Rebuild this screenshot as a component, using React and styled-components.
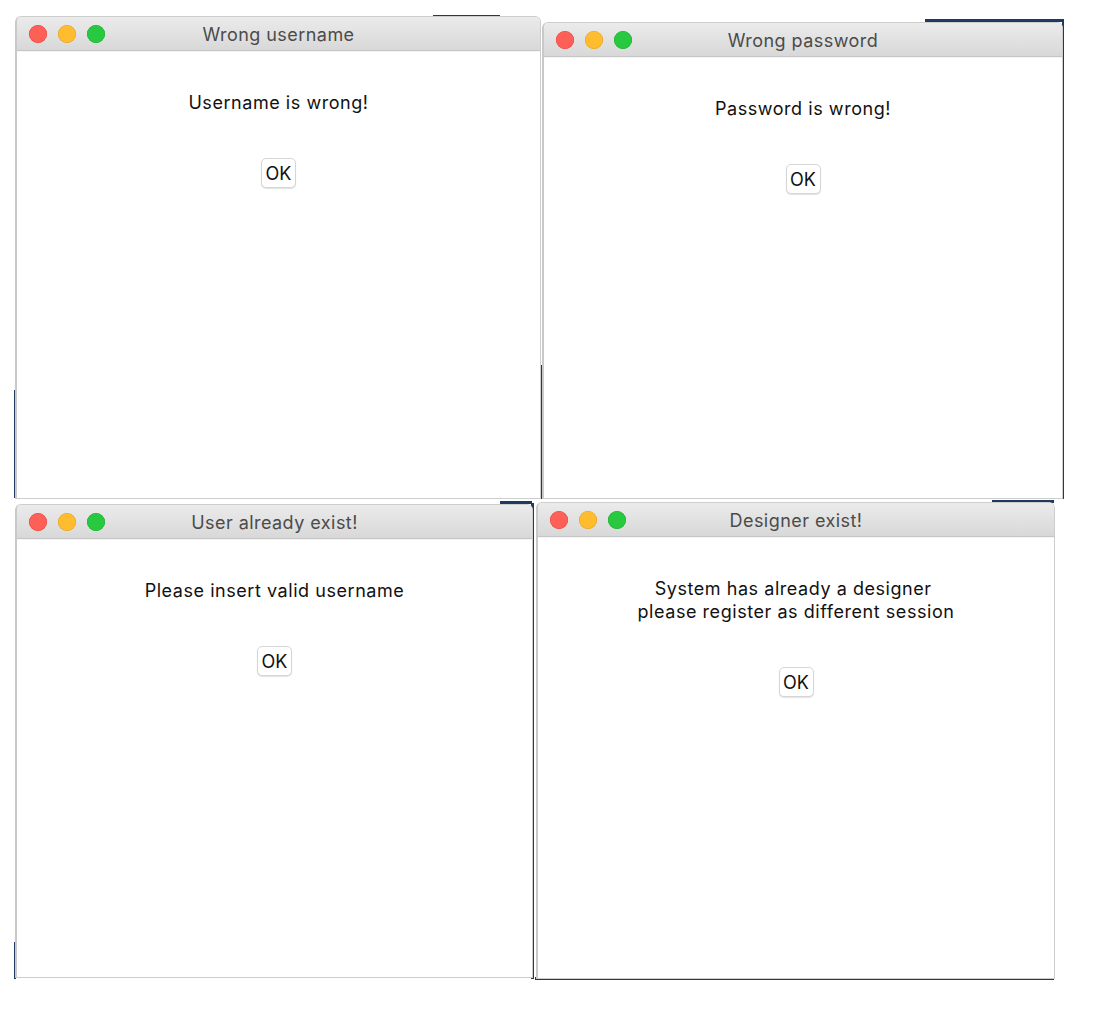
import React from "react";
import styled, { createGlobalStyle } from "styled-components";

const dialogs = [
  {
    id: 1,
    title: "Wrong username",
    lines: ["Username is wrong!"],
    box: { left: 15, top: 16, width: 526, height: 483 },
  },
  {
    id: 2,
    title: "Wrong password",
    lines: ["Password is wrong!"],
    box: { left: 542, top: 22, width: 521, height: 477 },
  },
  {
    id: 3,
    title: "User already exist!",
    lines: ["Please insert valid username"],
    box: { left: 15, top: 504, width: 518, height: 474 },
  },
  {
    id: 4,
    title: "Designer exist!",
    lines: ["System has already a designer\u00a0", "please register as different session"],
    box: { left: 536, top: 502, width: 519, height: 477 },
  },
];

// bits of the desktop that show behind the cropped screenshots
const slivers = [
  { left: 433, top: 15, width: 67, height: 2 },
  { left: 14, top: 390, width: 2, height: 108 },
  { left: 539, top: 365, width: 3, height: 134 },
  { left: 925, top: 19, width: 138, height: 3 },
  { left: 1062, top: 19, width: 2, height: 480 },
  { left: 440, top: 497, width: 27, height: 2 },
  { left: 500, top: 501, width: 32, height: 3 },
  { left: 531, top: 503, width: 3, height: 476 },
  { left: 14, top: 942, width: 2, height: 37 },
  { left: 992, top: 500, width: 62, height: 3 },
  { left: 535, top: 977, width: 519, height: 3 },
];

const App = () => {
  return (
    <>
      <GlobalStyle />
      <Canvas>
        {slivers.map((s, i) => (
          <Sliver key={i} style={s} />
        ))}
        {dialogs.map((d) => (
          <Window key={d.id} style={d.box}>
            <TitleBar>
              <Lights>
                <Light color="#fe5f57" edge="#e14640" />
                <Light color="#febc2e" edge="#dfa023" />
                <Light color="#28c840" edge="#1dac2c" />
              </Lights>
              <Title>{d.title}</Title>
              <span />
            </TitleBar>
            <Body>
              <Message>
                {d.lines.map((line) => (
                  <div key={line}>{line}</div>
                ))}
              </Message>
              <OkButton>OK</OkButton>
            </Body>
          </Window>
        ))}
      </Canvas>
    </>
  );
};

const GlobalStyle = createGlobalStyle`
  html, body {
    margin: 0;
    padding: 0;
    background: #fff;
  }
  body {
    font-family: Inter, "Noto Sans", "Liberation Sans", sans-serif;
  }
`;

const Canvas = styled.div`
  position: relative;
  width: 1096px;
  height: 1010px;
  background: #fff;
  overflow: hidden;
`;

const Sliver = styled.div`
  position: absolute;
  background: #1f3a5e;
`;

const Window = styled.div`
  position: absolute;
  display: flex;
  flex-direction: column;
  box-sizing: border-box;
  background: #fff;
  border: 1px solid #cdcdcd;
  border-left: 2px solid #c9c9c9;
  border-radius: 6px 6px 0 0;
  overflow: hidden;
`;

const TitleBar = styled.div`
  display: grid;
  grid-template-columns: 1fr auto 1fr;
  align-items: center;
  height: 33px;
  padding: 0 12px;
  background: linear-gradient(#ebebeb, #d8d8d8);
  border-bottom: 1px solid #c6c6c6;
  box-shadow: 0 1px 0 #f4f4f4;
`;

const Lights = styled.div`
  display: flex;
  gap: 11px;
`;

const Light = styled.span`
  width: 18px;
  height: 18px;
  border-radius: 50%;
  background: ${(p) => p.color};
  box-shadow: inset 0 0 0 0.5px ${(p) => p.edge};
`;

const Title = styled.div`
  font-size: 18px;
  color: #4b4b4b;
  letter-spacing: 0.45px;
  padding-top: 2px;
`;

const Body = styled.div`
  display: flex;
  flex-direction: column;
  align-items: center;
  padding-top: 40px;
`;

const Message = styled.div`
  font-size: 18px;
  line-height: 23px;
  letter-spacing: 0.55px;
  color: #111;
  text-align: center;
`;

const OkButton = styled.button`
  margin-top: 44px;
  width: 35px;
  height: 30px;
  padding: 0;
  background: #fff;
  border: 1px solid #d6d6d6;
  border-radius: 5px;
  box-shadow: 0 1px 1px rgba(0, 0, 0, 0.12);
  font-family: inherit;
  font-size: 18px;
  color: #111;
`;

export default App;
